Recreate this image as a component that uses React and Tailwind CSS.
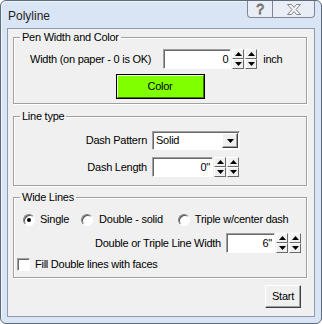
import React from 'react';

const font = "font-['Liberation_Sans',Arial,sans-serif] text-[11px] leading-[13px] tracking-[-0.25px] text-black";

const SpinBtn = ({ up }) => (
  <div className="flex h-[10px] w-[12px] items-center justify-center border border-t-white border-l-white border-r-[#696969] border-b-[#696969] bg-[#f0f0f0]">
    <svg width="7" height="4" viewBox="0 0 7 4">
      {up ? <path d="M3.5 0L7 4H0z" fill="#000" /> : <path d="M0 0h7L3.5 4z" fill="#000" />}
    </svg>
  </div>
);

const SpinCol = () => (
  <div className="flex flex-col">
    <SpinBtn up />
    <SpinBtn />
  </div>
);

const SpinEdit = ({ value, boxWidth }) => (
  <div className="flex items-stretch">
    <div
      className={`flex h-[20px] items-center justify-end bg-white pr-[2px] border border-[#a0a0a0] border-b-white border-r-white shadow-[inset_1px_1px_0_#696969] ${boxWidth}`}
    >
      {value}
    </div>
    <div className="ml-[1px] flex gap-[1px]">
      <SpinCol />
      <SpinCol />
    </div>
  </div>
);

const Radio = ({ checked }) => (
  <div className="flex h-[12px] w-[12px] items-center justify-center rounded-full border border-t-[#808080] border-l-[#808080] border-r-white border-b-white bg-white shadow-[inset_1px_1px_0_#505050]">
    {checked && <div className="h-[4px] w-[4px] rounded-full bg-black" />}
  </div>
);

const Group = ({ title, className, children }) => (
  <fieldset className={`border border-[#a0a0a0] shadow-[inset_1px_1px_0_#ffffff,1px_1px_0_#ffffff] ${className}`}>
    <legend className="ml-[6px] px-[2px]">{title}</legend>
    {children}
  </fieldset>
);

export default function App() {
  return (
    <div className={`${font} h-[324px] w-[322px] bg-white`}>
      <div className="flex h-[324px] w-[322px] flex-col rounded-[6px] border border-[#5f6b7a] bg-[#d9e5f4] shadow-[inset_1px_1px_0_#eef4fb]">
        {/* Title bar */}
        <div className="flex h-[27px] items-start justify-between">
          <span className="mt-[8px] ml-[7px] text-[12px] leading-[14px] tracking-normal text-[#1e1e1e]">Polyline</span>
          <div className="mr-[6px] flex h-[17px] overflow-hidden rounded-b-[4px] border border-t-0 border-[#7d8797] bg-[#e9eef6]">
            <div className="flex w-[25px] items-center justify-center border-r border-[#7d8797] text-[14px] text-[#f4f6fa] [-webkit-text-stroke:0.8px_#5a5a5a]">
              ?
            </div>
            <div className="flex w-[41px] items-center justify-center">
              <svg width="16" height="11" viewBox="0 0 16 11">
                <path
                  d="M1.5 0.5h4l2.5 3 2.5-3h4l-4.5 5 4.5 5h-4l-2.5-3-2.5 3h-4l4.5-5z"
                  fill="#f4f6fa"
                  stroke="#6a6a6a"
                  strokeWidth="0.8"
                />
              </svg>
            </div>
          </div>
        </div>

        {/* Client area */}
        <div className="mx-[6px] mb-[6px] flex flex-1 flex-col border border-[#8e9bae] bg-[#f0f0f0] pl-[5px] pr-[7px]">
          <Group title="Pen Width and Color" className="mt-[2px] pb-[4px]">
            <div className="mt-[5px] flex items-center">
              <span className="ml-[16px]">Width (on paper - 0 is OK)</span>
              <div className="ml-[12px]">
                <SpinEdit value="0" boxWidth="w-[68px]" />
              </div>
              <span className="ml-[6px]">inch</span>
            </div>
            <div className="mx-auto mt-[5px] h-[25px] w-[89px] border border-black">
              <div className="flex h-full items-center justify-center border border-t-[#eaffd5] border-l-[#eaffd5] border-r-[#3a7a00] border-b-[#3a7a00] bg-[#80ff00]">
                Color
              </div>
            </div>
          </Group>

          <Group title="Line type" className="mt-[6px] pb-[8px]">
            <div className="mt-[8px] grid grid-cols-[133px_88px] items-center gap-x-[5px] gap-y-[7px]">
              <span className="text-right">Dash Pattern</span>
              <div className="flex h-[19px] items-center justify-between border border-[#a0a0a0] border-b-white border-r-white bg-white pl-[3px] pr-[1px] shadow-[inset_1px_1px_0_#696969]">
                <span>Solid</span>
                <div className="flex h-[15px] w-[16px] items-center justify-center border border-t-white border-l-white border-r-[#404040] border-b-[#404040] bg-[#f0f0f0] shadow-[inset_-1px_-1px_0_#a0a0a0]">
                  <svg width="7" height="4" viewBox="0 0 7 4">
                    <path d="M0 0h7L3.5 4z" fill="#000" />
                  </svg>
                </div>
              </div>
              <span className="text-right">Dash Length</span>
              <SpinEdit value={'0"'} boxWidth="w-[61px]" />
            </div>
          </Group>

          <Group title="Wide Lines" className="mt-[5px] pb-[6px]">
            <div className="mt-[9px] flex h-[13px] items-center">
              <div className="ml-[9px]"><Radio checked /></div>
              <span className="ml-[5px]">Single</span>
              <div className="ml-[12px]"><Radio /></div>
              <span className="ml-[6px]">Double - solid</span>
              <div className="ml-[15px]"><Radio /></div>
              <span className="ml-[5px]">Triple w/center dash</span>
            </div>
            <div className="mt-[7px] mr-[5px] flex items-center justify-end">
              <span className="mr-[5px]">Double or Triple Line Width</span>
              <SpinEdit value={'6"'} boxWidth="w-[49px]" />
            </div>
            <div className="mt-[5px] flex h-[13px] items-center">
              <div className="ml-[3px] h-[13px] w-[13px] border border-[#a0a0a0] border-b-white border-r-white bg-white shadow-[inset_1px_1px_0_#696969]" />
              <span className="ml-[5px]">Fill Double lines with faces</span>
            </div>
          </Group>

          <div className="mt-[7px] mr-[6px] flex justify-end">
            <button className="flex h-[23px] w-[36px] items-center justify-center border border-t-white border-l-white border-r-[#404040] border-b-[#404040] bg-[#f0f0f0] shadow-[inset_-1px_-1px_0_#a0a0a0]">
              Start
            </button>
          </div>
        </div>
      </div>
    </div>
  );
}
